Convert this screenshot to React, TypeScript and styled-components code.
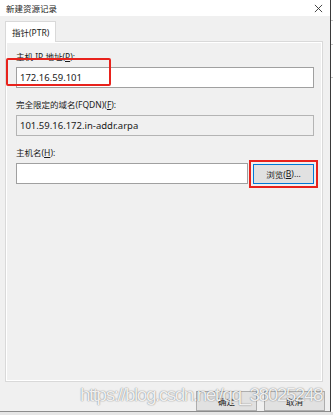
import React from 'react';
import styled, { createGlobalStyle } from 'styled-components';

const GlobalStyle = createGlobalStyle`
  html, body {
    margin: 0;
    padding: 0;
    background: #ffffff;
  }
  body {
    font-family: 'Noto Sans', 'Noto Sans CJK SC', sans-serif;
    font-size: 9px;
    color: #1a1a1a;
  }
`;

const App = () => {
  return (
    <>
      <GlobalStyle />
      <Screen>
        <Desk>
          <Dialog>
            <TitleBar>
              <Title>新建资源记录</Title>
              <CloseIcon viewBox="0 0 10 10">
                <path d="M1 1 L9 9 M9 1 L1 9" stroke="#333" strokeWidth="1" fill="none" />
              </CloseIcon>
            </TitleBar>
            <Body>
              <TabStrip>
                <Tab>指针(PTR)</Tab>
              </TabStrip>
              <Panel>
                <Group>
                  <Label>主机 IP 地址(<u>P</u>):</Label>
                  <Input>172.16.59.101</Input>
                  <RedBox />
                </Group>
                <Group>
                  <Label>完全限定的域名(FQDN)(<u>F</u>):</Label>
                  <ReadOnly>101.59.16.172.in-addr.arpa</ReadOnly>
                </Group>
                <Group>
                  <Label>主机名(<u>H</u>):</Label>
                  <Row>
                    <Input $grow />
                    <Button $focused>浏览(<u>B</u>)...</Button>
                  </Row>
                </Group>
              </Panel>
              <Footer>
                <Button>确定</Button>
                <Button>取消</Button>
              </Footer>
              <Watermark>https://blog.csdn.net/qq_38025248</Watermark>
            </Body>
          </Dialog>
          <BackWindow>
            <BackLine $top={20} />
            <BackLine $top={44} />
            <BackLine $top={77} />
          </BackWindow>
        </Desk>
        <BottomStrip />
      </Screen>
    </>
  );
};

export default App;

const Screen = styled.div`
  width: 333px;
  height: 415px;
  display: flex;
  flex-direction: column;
  overflow: hidden;
  background: #f0f0f0;
`;

const Desk = styled.div`
  display: flex;
  height: 412px;
`;

const Dialog = styled.div`
  width: 330px;
  display: flex;
  flex-direction: column;
  border-right: 1px solid #3a3a3a;
  border-bottom: 1px solid #8c8c8c;
  background: #f0f0f0;
`;

const BackWindow = styled.div`
  flex: 1;
  position: relative;
  background: #ffffff;
`;

const BackLine = styled.div<{ $top: number }>`
  position: absolute;
  left: 0;
  right: 0;
  top: ${p => p.$top}px;
  height: 1px;
  background: #c8c8c8;
`;

const BottomStrip = styled.div`
  flex: 1;
  background: #e6e6e6;
`;

const TitleBar = styled.div`
  height: 21px;
  background: #ffffff;
  display: flex;
  align-items: center;
  justify-content: space-between;
  padding: 0 7px 0 6px;
`;

const Title = styled.span`
  font-size: 8.5px;
  color: #222;
`;

const CloseIcon = styled.svg`
  width: 9px;
  height: 9px;
`;

const Body = styled.div`
  position: relative;
  flex: 1;
  display: flex;
  flex-direction: column;
  padding: 5px 7px 0 5px;
`;

const TabStrip = styled.div`
  display: flex;
`;

const Tab = styled.div`
  height: 20px;
  padding: 0 6px;
  display: flex;
  align-items: center;
  background: #ffffff;
  border: 1px solid #d9d9d9;
  border-bottom: none;
  margin-bottom: -1px;
  position: relative;
  z-index: 1;
  font-size: 8.5px;
`;

const Panel = styled.div`
  height: 330px;
  border: 1px solid #d9d9d9;
  box-shadow: inset 0 0 0 1px #ffffff;
  padding: 9px 8px 0 10px;
  display: flex;
  flex-direction: column;
  gap: 11px;
`;

const Group = styled.div`
  position: relative;
  display: flex;
  flex-direction: column;
  gap: 4px;
`;

const Label = styled.div`
  height: 12px;
  line-height: 12px;
  font-size: 8.5px;
  u {
    text-decoration: underline;
  }
`;

const Row = styled.div`
  display: flex;
  gap: 5px;
  align-items: center;
`;

const Input = styled.div<{ $grow?: boolean }>`
  box-sizing: border-box;
  height: 21px;
  ${p => (p.$grow ? 'flex: 1;' : '')}
  border: 1px solid #a0a0a0;
  background: #ffffff;
  padding: 0 3px;
  display: flex;
  align-items: center;
  font-size: 9.5px;
`;

const ReadOnly = styled(Input)`
  background: #f0f0f0;
  border-color: #b4b4b4;
`;

const RedBox = styled.div`
  position: absolute;
  left: -10px;
  top: 7px;
  width: 101px;
  height: 24px;
  border: 2px solid #e8221c;
  border-radius: 2px;
  pointer-events: none;
`;

const Button = styled.div<{ $focused?: boolean }>`
  box-sizing: border-box;
  width: 61px;
  height: 20px;
  display: flex;
  align-items: center;
  justify-content: center;
  background: #e1e1e1;
  border: 1px solid ${p => (p.$focused ? '#0078d7' : '#adadad')};
  font-size: 8.5px;
  ${p =>
    p.$focused
      ? `
    outline: 2px solid #e8221c;
    outline-offset: 2px;
    border-radius: 0;
  `
      : ''}
`;

const Footer = styled.div`
  display: flex;
  justify-content: flex-end;
  gap: 7px;
  padding: 9px 0 0 0;
  margin-right: -2px;
`;

const Watermark = styled.div`
  position: absolute;
  left: 80px;
  bottom: 5px;
  font-family: 'Liberation Sans', Arial, sans-serif;
  font-size: 19px;
  letter-spacing: -1.5px;
  color: rgba(255, 255, 255, 0.9);
  text-shadow: 0 0 1px rgba(0, 0, 0, 0.45), 0 0 2px rgba(0, 0, 0, 0.2);
  white-space: nowrap;
  pointer-events: none;
`;
